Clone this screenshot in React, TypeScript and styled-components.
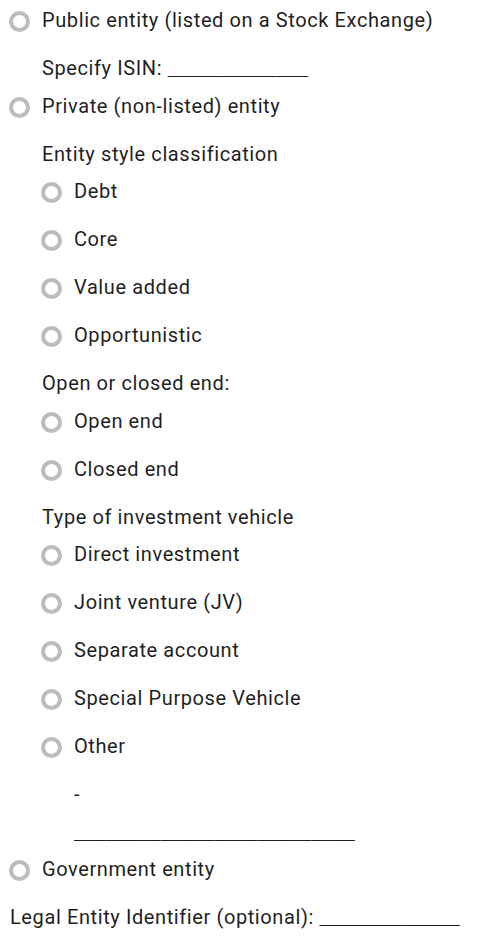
import React from 'react'
import styled, { createGlobalStyle } from 'styled-components'

const GlobalStyle = createGlobalStyle`
  body {
    margin: 8px;
    background: #fff;
    color: #1f1f1f;
    font-family: Roboto, "Noto Sans", sans-serif;
    font-size: 20px;
    letter-spacing: 0.6px;
  }
`

const Form = styled.form`
  display: flex;
  flex-direction: column;
  padding-left: 2px;
  line-height: 24px;
`

const Nested = styled.div`
  display: flex;
  flex-direction: column;
  padding-left: 32px;
`

const Option = styled.label`
  display: flex;
  align-items: flex-start;
  gap: 12px;
  margin-bottom: 24px;
  cursor: pointer;
`

const Radio = styled.input.attrs({ type: 'radio' })`
  appearance: none;
  flex-shrink: 0;
  box-sizing: border-box;
  width: 21px;
  height: 21px;
  margin: 3px 0 0 -1px;
  border: 4px solid #bcbcbc;
  border-radius: 50%;
  background: #fff;
`

const Caption = styled.div`
  height: 24px;
  margin-bottom: 13.5px;
`

// fill-in line, drawn with underscores in a mono face so they join up
const Blank = styled.span`
  font-family: "Liberation Mono", "DejaVu Sans Mono", monospace;
  font-size: 18px;
  line-height: 0;
  letter-spacing: 0;
  white-space: nowrap;
`

const line = (n: number) => '_'.repeat(n)

const styles = ['Debt', 'Core', 'Value added', 'Opportunistic']
const ends = ['Open end', 'Closed end']
const vehicles = [
  'Direct investment',
  'Joint venture (JV)',
  'Separate account',
  'Special Purpose Vehicle',
  'Other'
]

const App = () => (
  <>
    <GlobalStyle />
    <Form>
      <Option>
        <Radio name="entity" />
        Public entity (listed on a Stock Exchange)
      </Option>
      <Nested>
        <Caption>
          Specify ISIN: <Blank>{line(13)}</Blank>
        </Caption>
      </Nested>
      <Option>
        <Radio name="entity" />
        Private (non-listed) entity
      </Option>
      <Nested>
        <Caption>Entity style classification</Caption>
        {styles.map((s) => (
          <Option key={s}>
            <Radio name="style" />
            {s}
          </Option>
        ))}
        <Caption>Open or closed end:</Caption>
        {ends.map((s) => (
          <Option key={s}>
            <Radio name="end" />
            {s}
          </Option>
        ))}
        <Caption>Type of investment vehicle</Caption>
        {vehicles.map((s) => (
          <Option key={s}>
            <Radio name="vehicle" />
            {s}
          </Option>
        ))}
        <Nested>
          <Caption>-</Caption>
          <Caption>
            <Blank>{line(26)}</Blank>
          </Caption>
        </Nested>
      </Nested>
      <Option>
        <Radio name="entity" />
        Government entity
      </Option>
      <Caption>
        Legal Entity Identifier (optional): <Blank>{line(13)}</Blank>
      </Caption>
    </Form>
  </>
)

export default App
